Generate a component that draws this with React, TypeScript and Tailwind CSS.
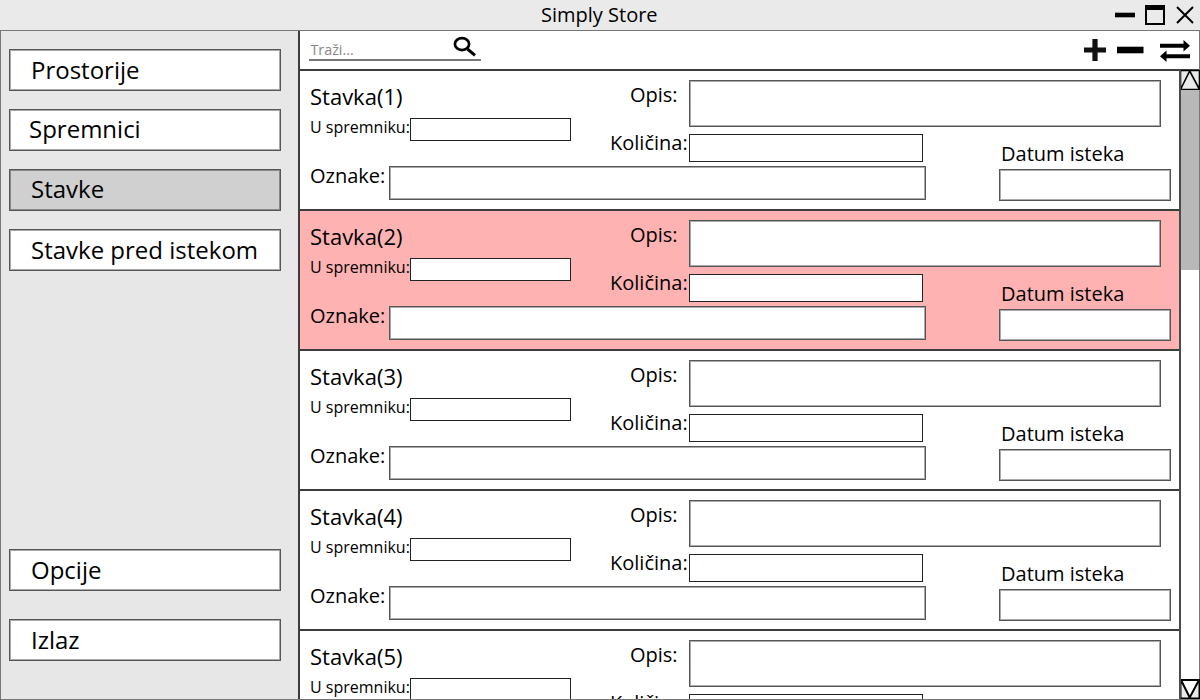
import React from "react";

const soft = "border border-[#555] shadow-[inset_0_0_0_1px_#aaa]";
const crisp = "border border-[#222]";

function NavButton({ label, active, pad = "pl-[21px]", shift = "" }: { label: string; active?: boolean; pad?: string; shift?: string }) {
  return (
    <button className={`flex h-[42px] w-[272px] shrink-0 items-center text-left text-[24px] leading-[40px] ${active ? "border border-[#555] bg-[#d0d0d0] shadow-[inset_0_0_0_1px_#888]" : `bg-white ${soft}`} ${pad}`}>
      <span className={shift}>{label}</span>
    </button>
  );
}

function Item({ n, selected }: { n: number; selected?: boolean }) {
  return (
    <section className={`flex h-[140px] shrink-0 border-b-2 border-[#3c3c3c] pl-[10px] ${selected ? "bg-[#ffb2b2]" : "bg-white"}`}>
      <div className="flex w-[379px] shrink-0 flex-col">
        <div className="flex h-[95px]">
          <div className="w-[300px] shrink-0 pt-[10px]">
            <h2 className="text-[22px] leading-[30px]">{`Stavka(${n})`}</h2>
            <div className="flex pt-[7px]">
              <span className="-mt-px w-[100px] whitespace-nowrap text-[16px] leading-[20px]">U spremniku:</span>
              <span className={`h-[23px] w-[161px] bg-white ${crisp}`} />
            </div>
          </div>
          <div className="w-[79px] whitespace-nowrap pt-[10px] text-[20px] leading-[28px]">
            <p className="pl-[20px]">Opis:</p>
            <p className="pt-[20px]">Količina:</p>
          </div>
        </div>
        <div className="flex">
          <span className="w-[79px] shrink-0 text-[20px] leading-[20px]">Oznake:</span>
          <span className={`h-[34px] w-[537px] shrink-0 bg-white ${soft}`} />
        </div>
      </div>
      <div className="flex flex-col pt-[9px]">
        <div className={`h-[47px] w-[472px] bg-white ${soft}`} />
        <div className="flex">
          <div className={`mt-[7px] h-[28px] w-[234px] bg-white ${crisp}`} />
          <div className="ml-[76px] pt-[13px]">
            <p className="pl-[2px] text-[20px] leading-[28px]">Datum isteka</p>
            <div className={`mt-px h-[32px] w-[172px] bg-white ${soft}`} />
          </div>
        </div>
      </div>
    </section>
  );
}

export default function App() {
  return (
    <main className="flex h-[700px] w-[1200px] flex-col overflow-hidden bg-white font-['Open_Sans',sans-serif] text-black">
      <header className="flex h-[30px] shrink-0 bg-[#eaeaea]">
        <div className="w-[1110px] pl-[541px] text-[20px] leading-[30px]">Simply Store</div>
        <svg width="90" height="30" viewBox="1110 0 90 30" fill="none" stroke="#000">
          <path d="M1115 15H1135" strokeWidth="4.6" />
          <path d="M1146 6V24H1164V6" strokeWidth="2" />
          <path d="M1145 7.5H1165" strokeWidth="5" />
          <path d="M1177 7L1193 23M1193 7L1177 23" strokeWidth="2" />
        </svg>
      </header>
      <div className="flex min-h-0 flex-1 border border-[#777]">
        <nav className="flex w-[297px] shrink-0 flex-col gap-[18px] bg-[#e7e7e7] pl-[8px] pt-[18px]">
          <NavButton label="Prostorije" />
          <NavButton label="Spremnici" pad="pl-[19px]" shift="-mt-[2px]" />
          <NavButton label="Stavke" active shift="-mt-[2px]" />
          <NavButton label="Stavke pred istekom" />
          <div className="h-[242px] shrink-0" />
          <NavButton label="Opcije" />
          <div className="-mt-[8px]" />
          <NavButton label="Izlaz" />
        </nav>
        <div className="flex min-w-0 flex-1 flex-col border-l-2 border-[#3c3c3c]">
          <div className="flex h-[40px] shrink-0 border-b-2 border-[#3c3c3c]">
            <div className="ml-[9px] flex h-[30px] w-[172px] border-b-2 border-[#777]">
              <span className="pl-[1.5px] pt-[9px] text-[14.3px] leading-[20px] text-[#888]">Traži...</span>
            </div>
            <svg className="-ml-[31px]" width="31" height="30" viewBox="450 31 31 30" fill="none" stroke="#000">
              <ellipse cx="462" cy="44.1" rx="7.1" ry="6" strokeWidth="2.7" />
              <path d="M467.5 49L475 55.3" strokeWidth="3" />
            </svg>
            <svg className="ml-[594px]" width="124" height="38" viewBox="1075 31 124 38" fill="none" stroke="#111">
              <path d="M1084 50H1106M1095 39V61" strokeWidth="5.2" />
              <path d="M1117 50H1143.5" strokeWidth="6.6" stroke="#000" />
              <path d="M1160 45.7H1185M1165 56.3H1190" strokeWidth="4" stroke="#000" />
              <path d="M1183.5 40L1190 45.7L1183.5 51.4ZM1166.5 50.6L1160 56.3L1166.5 62Z" fill="#000" stroke="none" />
            </svg>
          </div>
          <div className="flex min-h-0 flex-1">
            <div className="flex w-[879px] flex-col overflow-hidden">
              <Item n={1} />
              <Item n={2} selected />
              <Item n={3} />
              <Item n={4} />
              <Item n={5} />
            </div>
            <aside className="-mt-px flex w-[20px] shrink-0 flex-col border-l-2 border-[#4a4a4a] bg-white">
              <svg className="w-[19px] shrink-0" height="20" viewBox="0 0 19 20" fill="#eaeaea" stroke="#000">
                <path d="M-.5.5H18.5V19.5H-.5ZM0 18.5L8.7 1L18 18.5" strokeWidth="1.6" />
              </svg>
              <div className="h-[180px] shrink-0 bg-[#b8b8b8]" />
              <svg className="mt-auto w-[19px] shrink-0" height="20" viewBox="0 0 19 20" fill="#eaeaea" stroke="#000">
                <path d="M-.5 1H18.5V19.5H-.5ZM0 1L8.7 18.5L18 1" strokeWidth="2" />
              </svg>
            </aside>
          </div>
        </div>
      </div>
    </main>
  );
}
